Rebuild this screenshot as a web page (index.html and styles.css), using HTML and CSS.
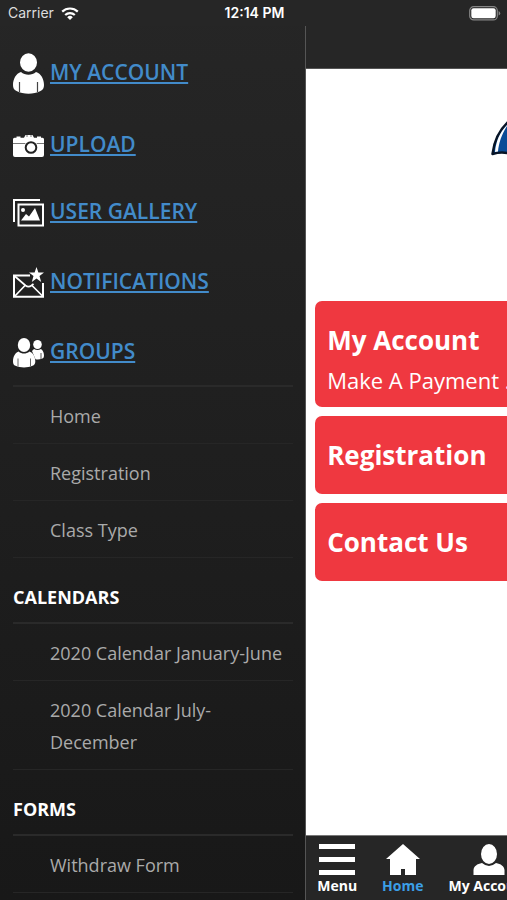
FILE: index.html
```html
<!DOCTYPE html>
<html lang="en">
<head>
<meta charset="utf-8">
<meta name="viewport" content="width=device-width, initial-scale=1">
<title>Menu</title>
<link rel="stylesheet" href="styles.css">
</head>
<body>
<header class="status">
  <div class="carrier">
    <span>Carrier</span>
    <svg width="18" height="13" viewBox="0 0 18 13" aria-hidden="true">
      <g fill="none" stroke="#fff" stroke-width="2.2"><path d="M1.2 4.6a11.3 11.3 0 0 1 15.6 0"/><path d="M4.2 8a6.9 6.9 0 0 1 9.6 0"/></g>
      <path d="M9 13 6.2 10.2a4 4 0 0 1 5.6 0z" fill="#fff"/>
    </svg>
  </div>
  <time class="clock">12:14 PM</time>
  <svg class="battery" width="32" height="15" viewBox="0 0 32 15" aria-hidden="true">
    <rect x="0.7" y="0.7" width="27.6" height="13.2" rx="4" fill="none" stroke="#858585" stroke-width="1.2"/>
    <rect x="2.3" y="2.3" width="24.4" height="10" rx="2.2" fill="#fff"/>
    <path d="M29.6 5v4.6q1.6-.7 1.6-2.3T29.6 5z" fill="#858585"/>
  </svg>
</header>
<div class="layout">
  <nav class="drawer" aria-label="Main menu">
    <ul class="shortcuts">
      <li>
        <svg width="31" height="41" viewBox="0 0 31 41" aria-hidden="true">
          <ellipse cx="15.500" cy="9.500" rx="8.500" ry="9.300" fill="#fff"/>
          <path d="M8 19c4 3.600 11 3.600 15 0 5 1.500 8 7 8 13 0 3-1 5-3.500 6-7 3.500-17 3.500-24 0C1 37 0 35 0 32c0-6 3-11.500 8-13z" fill="#fff"/>
          <path d="M6.500 29v10M24.500 29v10" stroke="#444" stroke-width="1.200"/>
        </svg>
        <a href="#account">MY ACCOUNT</a>
      </li>
      <li>
        <svg width="31" height="24" viewBox="0 0 31 24" aria-hidden="true">
          <path d="M3.500 2.500h4v1.300h3.500L12.500 1h7L21 3.800h3V2.500h4v1.300h1.500A1.500 1.500 0 0 1 31 5.300V21a2 2 0 0 1-2 2H2a2 2 0 0 1-2-2V5.300a1.500 1.500 0 0 1 1.500-1.500h2z" fill="#fff"/>
          <path d="M0 9.500h31M14 1v2M18 1v2" stroke="#777" stroke-width="1"/>
          <circle cx="18" cy="13.500" r="7" fill="#fff"/>
          <circle cx="18" cy="13.500" r="5.300" fill="#fff" stroke="#222" stroke-width="2"/>
        </svg>
        <a href="#upload">UPLOAD</a>
      </li>
      <li>
        <svg width="31" height="29" viewBox="0 0 31 29" aria-hidden="true">
          <path d="M1 24V2h26" fill="none" stroke="#fff" stroke-width="2"/>
          <rect x="5.500" y="6.500" width="24.500" height="21" fill="none" stroke="#fff" stroke-width="2"/>
          <circle cx="10" cy="12" r="2" fill="#fff"/>
          <path d="M8 22.500l5-6.500 3 2.500 6-8.500 5 12.500z" fill="#fff"/>
        </svg>
        <a href="#gallery">USER GALLERY</a>
      </li>
      <li>
        <svg width="31" height="31" viewBox="0 0 31 31" aria-hidden="true">
          <path d="M17 8.500H1v21.200h29V16" fill="none" stroke="#fff" stroke-width="2"/>
          <path d="M1.500 9l11 9.500q3 2.200 6 0l2-1.700M2 29l10-10.500M29.500 29 19 18.500" fill="none" stroke="#fff" stroke-width="1.700"/>
          <path d="M23.500 0l1.900 5.500H31l-4.500 3.600 1.700 6-4.700-3.500-4.700 3.500 1.700-6L16 5.500h5.600z" fill="#fff"/>
        </svg>
        <a href="#notifications">NOTIFICATIONS</a>
      </li>
      <li>
        <svg width="31" height="30" viewBox="0 0 31 30" aria-hidden="true">
          <ellipse cx="24.500" cy="6.500" rx="4.300" ry="4.600" fill="#fff"/>
          <path d="M21 11q3.500 2 7 0c2.500 1.500 3 4.500 3 7q0 2.300-2 2.800-3.500 1-6.500.4L19 13z" fill="#fff"/>
          <path d="M28 15v6" stroke="#555"/>
          <ellipse cx="11" cy="7" rx="6.200" ry="7" fill="#fff"/>
          <path d="M5.500 13.500c3.500 2.700 7.500 2.700 11 0 4 1.500 5.800 5.500 5.800 10 0 2.500-1 3.500-2.800 4.300-5 2.300-12 2.300-17 0C.7 27 0 26 0 23.500c0-4.500 1.700-8.500 5.500-10z" fill="#fff"/>
          <path d="M5 20.500v8M17.500 20.500v8" stroke="#666"/>
        </svg>
        <a href="#groups">GROUPS</a>
      </li>
    </ul>
    <ul class="links">
      <li><a href="#home">Home</a></li>
      <li><a href="#registration">Registration</a></li>
      <li><a href="#class-type">Class Type</a></li>
    </ul>
    <h2>CALENDARS</h2>
    <ul class="links">
      <li><a href="#jan-june">2020 Calendar January-June</a></li>
      <li><a href="#july-dec">2020 Calendar July-December</a></li>
    </ul>
    <h2>FORMS</h2>
    <ul class="links">
      <li><a href="#withdraw">Withdraw Form</a></li>
    </ul>
  </nav>
  <div class="viewport">
    <div class="page">
      <div class="titlebar"></div>
      <main class="content">
        <svg class="logo" width="138" height="100" viewBox="0 0 138 100" role="img" aria-label="Umbrella logo">
          <path d="M1.500 43C3 30 8 19 18 10 50-10 88-10 120 10c10 9 15 20 16.500 33q-8-4-18 0-12-5-24 0-12-5-25 0-13-5-25 0-12-5-25 0-8-3-18 0z" fill="#0b4c97" stroke="#071426" stroke-width="2.500" stroke-linejoin="round"/>
          <path d="M4 41C5 30 9 20 18 12 11 22 8 31 7 40.500z" fill="#fff"/>
          <path d="M69 42v44q0 10 9 10t9-10" fill="none" stroke="#071426" stroke-width="3"/>
        </svg>
        <a class="card" href="#account"><strong>My Account</strong><span>Make A Payment ...</span></a>
        <a class="card" href="#registration"><strong>Registration</strong></a>
        <a class="card" href="#contact"><strong>Contact Us</strong></a>
      </main>
      <nav class="tabs" aria-label="Tabs">
        <button type="button">
          <svg width="36" height="33" viewBox="0 0 36 33" aria-hidden="true"><path d="M0 1h36v5H0zM0 14h36v5H0zM0 27h36v5H0z" fill="#fff"/></svg>
          Menu
        </button>
        <button type="button" class="active">
          <svg width="34" height="33" viewBox="0 0 34 33" aria-hidden="true"><path d="M17 1l17 15h-4v16H19v-6h-4v6H4V16H0z" fill="#fff"/></svg>
          Home
        </button>
        <button type="button">
          <svg width="32" height="33" viewBox="0 0 32 33" aria-hidden="true"><ellipse cx="16" cy="11" rx="8" ry="10" fill="#fff"/><path d="M9 20q7 6 14 0c5 1 8 3 8.500 7v5H.5v-5C1 23 4 21 9 20z" fill="#fff"/></svg>
          My Account
        </button>
      </nav>
    </div>
  </div>
</div>
</body>
</html>
```
FILE: styles.css
```css
* { box-sizing: border-box; }
body {
  margin: 0;
  height: 100vh;
  display: flex;
  flex-direction: column;
  overflow: hidden;
  background: linear-gradient(#262626, #181818);
  color: #fff;
  font-family: "Open Sans", sans-serif;
}
ul { list-style: none; margin: 0; padding: 0; }

.status {
  flex: none;
  height: 26px;
  padding: 0 6px 0 8px;
  display: grid;
  grid-template-columns: 1fr auto 1fr;
  align-items: center;
  background: #262626;
  font: 14px/26px Inter, sans-serif;
}
.carrier { display: flex; align-items: center; gap: 7px; color: #ddd; }
.clock { font-weight: 600; }
.battery { justify-self: end; }

.layout {
  flex: 1;
  min-height: 0;
  display: grid;
  grid-template-columns: 60.2% 1fr;
}
.drawer { min-width: 0; overflow: hidden; padding: 27px 12px 0 13px; }

.shortcuts {
  display: flex;
  flex-direction: column;
  gap: 40px;
  padding-bottom: 17px;
  border-bottom: 2px solid #2a2a2a;
}
.shortcuts li { display: flex; align-items: center; gap: 6px; }
.shortcuts svg { display: block; flex: none; }
.shortcuts a {
  padding-bottom: 4px;
  color: #428bca;
  font-size: 21px;
  font-weight: 600;
  line-height: 20px;
}

.links li { border-bottom: 1px solid #262626; }
.links a {
  display: block;
  padding: 13px 0 11px 37px;
  color: #aaa;
  font-size: 18px;
  line-height: 32px;
  text-decoration: none;
}
.drawer h2 {
  margin: 0;
  padding: 23px 0 9px;
  border-bottom: 2px solid #2a2a2a;
  font-size: 18px;
  font-weight: 700;
  line-height: 32px;
}

.viewport { min-width: 0; overflow: hidden; border-left: 1px solid #555; }
.page {
  width: 100vw;
  height: 100%;
  display: flex;
  flex-direction: column;
  background: #fff;
}
.titlebar { flex: none; height: 43px; background: #262626; border-bottom: 1px solid #555; }
.content {
  flex: 1;
  min-height: 0;
  display: flex;
  flex-direction: column;
  gap: 9px;
  padding: 42px 9px 0;
}
.logo { align-self: center; display: block; margin-bottom: 81px; }
.card {
  display: block;
  padding: 20px 12px;
  border-radius: 7px;
  background: #ef3840;
  color: #fff;
  text-decoration: none;
}
.card strong { display: block; font-size: 26px; line-height: 38px; }
.card span { display: block; font-size: 22px; line-height: 28px; padding-top: 7px; margin-bottom: -7px; }

.tabs {
  flex: none;
  display: flex;
  gap: 25px;
  padding: 7px 11px 4px;
  background: #262626;
  border-top: 1px solid #777;
}
.tabs button {
  display: flex;
  flex-direction: column;
  align-items: center;
  padding: 0;
  border: 0;
  background: none;
  color: #fff;
  font: 700 14px/20px "Open Sans", sans-serif;
}
.tabs .active { color: #3b9fe6; }
```
